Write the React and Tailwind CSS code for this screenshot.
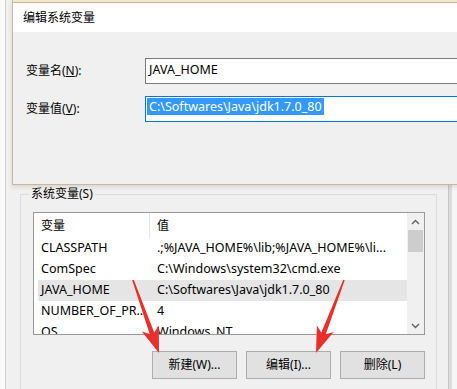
import React from "react";

function arrowPoints(ax, ay, tx, ty, headLen, headHalf, w0, w1) {
  const dx = tx - ax, dy = ty - ay;
  const L = Math.hypot(dx, dy);
  const ux = dx / L, uy = dy / L;
  const nx = -uy, ny = ux;
  const bx = tx - ux * headLen, by = ty - uy * headLen;
  const bx2 = tx - ux * (headLen - 5), by2 = ty - uy * (headLen - 5);
  const p = [
    [ax + nx * w0, ay + ny * w0],
    [bx2 + nx * w1, by2 + ny * w1],
    [bx + nx * headHalf, by + ny * headHalf],
    [tx, ty],
    [bx - nx * headHalf, by - ny * headHalf],
    [bx2 - nx * w1, by2 - ny * w1],
    [ax - nx * w0, ay - ny * w0],
  ];
  return p.map((q) => q[0].toFixed(1) + "," + q[1].toFixed(1)).join(" ");
}

const rows = [
  ["CLASSPATH", ".;%JAVA_HOME%\\lib;%JAVA_HOME%\\li...", false],
  ["ComSpec", "C:\\Windows\\system32\\cmd.exe", false],
  ["JAVA_HOME", "C:\\Softwares\\Java\\jdk1.7.0_80", true],
  ["NUMBER_OF_PR...", "4", false],
  ["OS", "Windows_NT", false],
];

function Chevron({ up }) {
  return (
    <svg width="9" height="6" viewBox="0 0 9 6">
      <path
        d={up ? "M1 5 L4.5 1.5 L8 5" : "M1 1 L4.5 4.5 L8 1"}
        fill="none"
        stroke="#606060"
        strokeWidth="1.4"
      />
    </svg>
  );
}

export default function App() {
  return (
    <div className="relative w-[457px] h-[389px] overflow-hidden bg-[#f0f0f0] text-[12px] text-black font-['Noto_Sans','Noto_Sans_CJK_SC',sans-serif]">
      {/* underlying window */}
      <div className="flex h-full">
        <div className="w-[5px] bg-[#fafafa]" />
        <div className="w-px bg-[#d2d2d2]" />
        <div className="w-[442px] flex flex-col">
          <div className="ml-[14px] mt-[194px] w-[417px] relative border border-[#dcdcdc] pt-[17px] pl-[12px] pb-[20px]">
            <div className="absolute -top-[9px] left-[8px] px-[2px] bg-[#f0f0f0] leading-[16px]">
              系统变量(S)
            </div>
            <div className="w-[392px] h-[123px] border border-[#999999] bg-white flex overflow-hidden">
              <div className="flex-1 flex flex-col overflow-hidden">
                <div className="h-[25px] shrink-0 flex ml-[4px] items-center">
                  <div className="w-[112px] h-full border-r border-[#e5e5e5] pl-[3px] flex items-center">
                    变量
                  </div>
                  <div className="pl-[7px] flex items-center h-full">值</div>
                </div>
                {rows.map(([n, v, sel]) => (
                  <div
                    key={n}
                    className={
                      "h-[21px] shrink-0 flex items-center ml-[4px] whitespace-nowrap text-[12.5px] " +
                      (sel ? "bg-[#e5e5e5]" : "")
                    }
                  >
                    <div className="w-[112px] pl-[3px]">{n}</div>
                    <div className="pl-[7px]">{v}</div>
                  </div>
                ))}
              </div>
              <div className="w-[17px] bg-[#f0f0f0] flex flex-col">
                <div className="h-[17px] flex items-center justify-center">
                  <Chevron up />
                </div>
                <div className="h-[22px] mx-[1px] bg-[#cdcdcd]" />
                <div className="flex-1" />
                <div className="h-[17px] flex items-center justify-center">
                  <Chevron />
                </div>
              </div>
            </div>
            <div className="mt-[16px] flex justify-end gap-[9px] w-[392px]">
              <div className="w-[85px] h-[28px] border border-[#adadad] bg-[#e1e1e1] flex items-center justify-center">
                新建(W)...
              </div>
              <div className="w-[85px] h-[28px] border border-[#adadad] bg-[#e1e1e1] flex items-center justify-center">
                编辑(I)...
              </div>
              <div className="w-[85px] h-[28px] border border-[#adadad] bg-[#e1e1e1] flex items-center justify-center">
                删除(L)
              </div>
            </div>
          </div>
        </div>
        <div className="w-px bg-[#c6c6c6]" />
        <div className="w-[3px] bg-[#dcdcdc]" />
        <div className="w-[5px] bg-[#f6f6f6]" />
      </div>

      {/* edit dialog window */}
      <div className="absolute left-[12px] top-0 w-[460px] h-[185px] border-l border-b border-[#c9b89e] flex flex-col bg-[#f0f0f0] shadow-[0_2px_4px_rgba(120,90,60,0.18)]">
        <div className="h-[2px] bg-[#f1e8d6]" />
        <div className="h-px bg-[#c8b38e]" />
        <div className="h-[29px] bg-white flex items-center pl-[10px]">编辑系统变量</div>
        <div className="flex-1 pt-[26px] pl-[13px]">
          <div className="flex items-center h-[26px]">
            <div className="w-[119px]">
              变量名(<span className="underline">N</span>):
            </div>
            <div className="flex-1 h-[26px] border border-[#7a7a7a] bg-white pl-[3px] pt-[2px] leading-[17px] whitespace-nowrap text-[12.5px]">
              JAVA_HOME
            </div>
          </div>
          <div className="flex items-center h-[26px] mt-[12px]">
            <div className="w-[119px]">
              变量值(<span className="underline">V</span>):
            </div>
            <div className="flex-1 h-[26px] border border-[#0078d7] bg-white pl-[1px] pt-[1px] whitespace-nowrap text-[12.5px]">
              <span className="inline-block bg-[#3399ff] text-white leading-[17px] px-[2px]">
                C:\Softwares\Java\jdk1.7.0_80
              </span>
            </div>
          </div>
        </div>
      </div>

      {/* red annotation arrows */}
      <svg className="absolute inset-0 pointer-events-none" width="457" height="389">
        <polygon points={arrowPoints(133, 280, 159, 353, 26, 9, 0.8, 2.4)} fill="#e8302a" />
        <polygon points={arrowPoints(344, 280, 316, 353, 26, 9, 0.8, 2.4)} fill="#e8302a" />
      </svg>
    </div>
  );
}
